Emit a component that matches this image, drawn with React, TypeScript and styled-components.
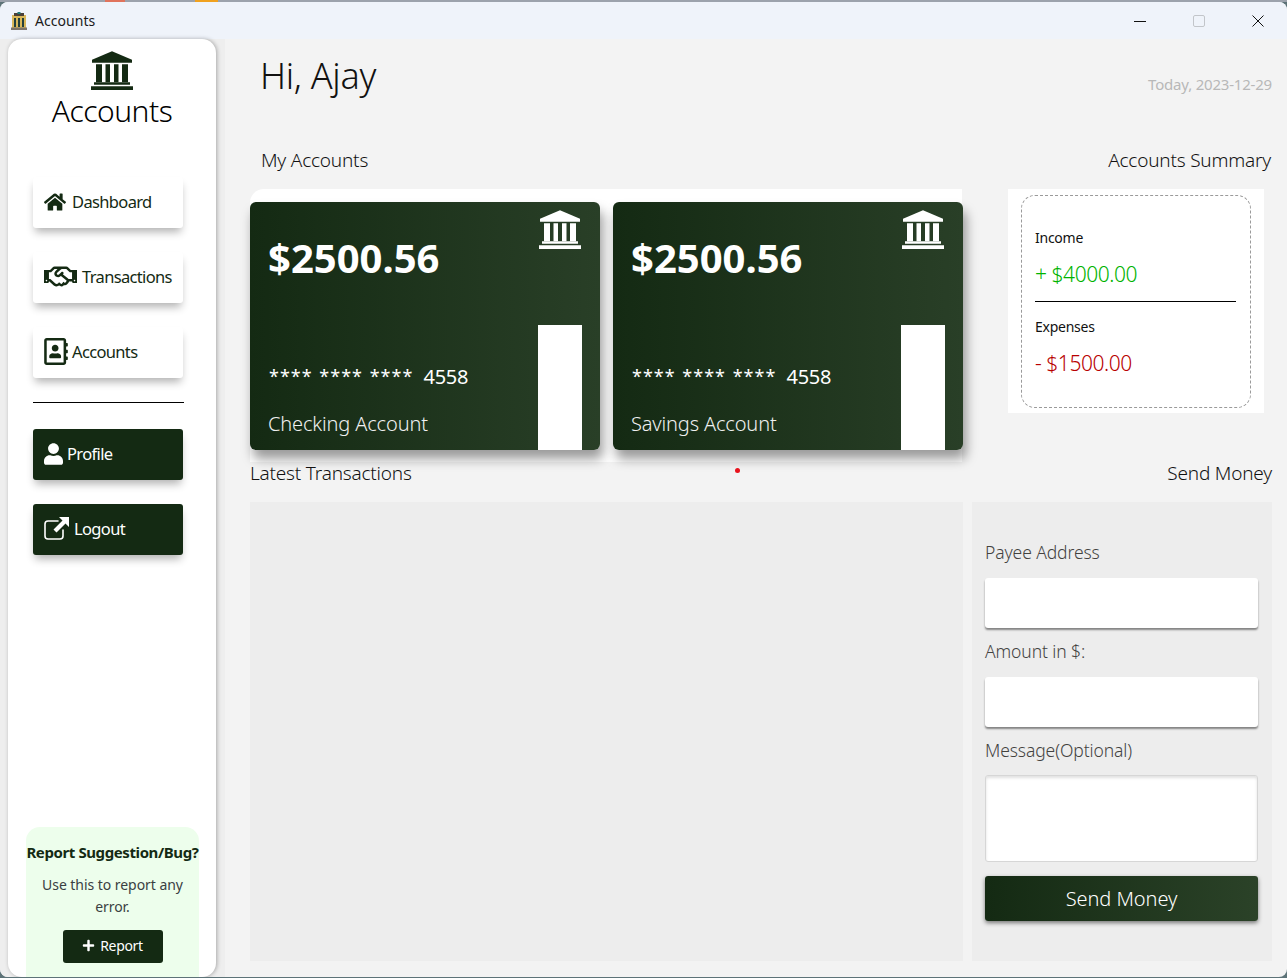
import React from "react";
import styled, { createGlobalStyle } from "styled-components";
import { FaHome, FaRegHandshake, FaRegAddressBook, FaUser, FaPlus } from "react-icons/fa";

const GREEN = "#142a13";
const FONT = `"Noto Sans", "Open Sans", sans-serif`;

const GlobalStyle = createGlobalStyle`
  html, body {
    margin: 0;
    padding: 0;
    background: #5d7378;
  }
  * {
    box-sizing: border-box;
  }
`;

const Desktop = styled.div`
  width: 1287px;
  height: 978px;
  padding-top: 2px;
  overflow: hidden;
  background: linear-gradient(
      90deg,
      transparent 105px,
      #e0735c 105px 125px,
      transparent 125px 195px,
      #f0a11e 195px 218px,
      transparent 218px
    )
    0 0 / 100% 2px no-repeat,
    linear-gradient(#9ca2ac 0 2px, #5d7378 2px);
  font-family: ${FONT};
`;

const Window = styled.div`
  height: 975px;
  display: flex;
  flex-direction: column;
  background: #f3f3f3;
  border-radius: 8px;
  overflow: hidden;
`;

const TitleBar = styled.div`
  height: 37px;
  flex: none;
  display: flex;
  align-items: center;
  padding-left: 11px;
  background: #eff3fa;
  color: #1b1b1b;
  font-size: 14px;
`;

const TitleText = styled.span`
  margin-left: 8px;
  letter-spacing: 0.05px;
`;

const WindowButtons = styled.div`
  margin-left: auto;
  display: flex;
`;

const WindowButton = styled.div`
  width: 59px;
  height: 37px;
  display: flex;
  align-items: center;
  justify-content: center;
`;

const Content = styled.div`
  flex: 1;
  min-height: 0;
  display: flex;
`;

const SideStrip = styled.div`
  width: 225px;
  flex: none;
  padding-left: 8px;
  background: #eeeeee;
`;

const Sidebar = styled.aside`
  width: 208px;
  height: 100%;
  display: flex;
  flex-direction: column;
  padding: 12px 0 0 25px;
  background: #fff;
  border-radius: 14px;
  box-shadow: 1px 0 4px rgba(0, 0, 0, 0.3);
`;

const Brand = styled.div`
  margin-left: -25px;
  margin-bottom: 46px;
  display: flex;
  flex-direction: column;
  align-items: center;
  color: ${GREEN};
`;

const BrandName = styled.div`
  margin-top: 1px;
  color: #000;
  font-size: 30px;
  font-weight: 300;
  line-height: 40px;
  letter-spacing: -0.5px;
`;

const NavButton = styled.div<{ $dark?: boolean; $gap: number }>`
  width: 150px;
  height: 51px;
  display: flex;
  align-items: center;
  gap: ${(p) => p.$gap}px;
  padding: 0 0 2px 11px;
  border-radius: 3px;
  background: ${(p) => (p.$dark ? GREEN : "#fff")};
  color: ${(p) => (p.$dark ? "#fff" : GREEN)};
  font-size: 16.5px;
  letter-spacing: -0.65px;
  box-shadow: 0 6px 8px -2px rgba(0, 0, 0, 0.3);
  margin-bottom: 24px;
`;

const BookIcon = styled(FaRegAddressBook)`
  width: 24px;
  height: 27px;
`;

const UserIcon = styled(FaUser)`
  width: 19px;
  height: 22px;
`;

const NavRule = styled.hr`
  width: 151px;
  height: 1px;
  margin: 0 0 26px;
  border: 0;
  background: #000;
`;

const ReportBox = styled.div`
  width: 173px;
  margin: auto 0 0 -7px;
  height: 150px;
  display: flex;
  flex-direction: column;
  align-items: center;
  padding-top: 15px;
  border-radius: 14px 14px 0 0;
  background: #edfeec;
  text-align: center;
`;

const ReportTitle = styled.div`
  color: ${GREEN};
  font-size: 15px;
  font-weight: 700;
  line-height: 20px;
  letter-spacing: -0.4px;
  white-space: nowrap;
`;

const ReportText = styled.div`
  margin-top: 12px;
  width: 150px;
  color: #3a4042;
  font-size: 14px;
  line-height: 22px;
  letter-spacing: -0.05px;
`;

const ReportButton = styled.div`
  width: 100px;
  height: 33px;
  margin-top: 12px;
  padding-bottom: 2px;
  display: flex;
  align-items: center;
  justify-content: center;
  gap: 5px;
  border-radius: 3px;
  background: ${GREEN};
  color: #fff;
  font-size: 14px;
  letter-spacing: -0.3px;
`;

const Main = styled.main`
  flex: 1;
  min-width: 0;
  padding: 0 15px 0 25px;
  display: flex;
  flex-direction: column;
`;

const Greeting = styled.div`
  height: 109px;
  display: flex;
  justify-content: space-between;
  padding: 13px 0 0 10px;
`;

const Hello = styled.h1`
  margin: 0;
  color: #111;
  font-size: 36px;
  font-weight: 300;
  line-height: 48px;
  letter-spacing: -0.3px;
`;

const Today = styled.div`
  margin-top: 22px;
  color: #b8b8b8;
  font-size: 15px;
  line-height: 20px;
  letter-spacing: -0.2px;
`;

const SectionHead = styled.div<{ $inset?: number }>`
  display: flex;
  justify-content: space-between;
  padding: 0 1px 0 ${(p) => p.$inset || 0}px;
  color: #111;
  font-size: 19px;
  font-weight: 300;
  line-height: 24px;
  letter-spacing: -0.2px;
`;

const TopRow = styled.div`
  margin-top: 17px;
  display: flex;
  align-items: flex-start;
`;

const CardStrip = styled.div`
  width: 712px;
  height: 273px;
  flex: none;
  display: flex;
  gap: 13px;
  padding-top: 13px;
  background: #fff;
  border-radius: 14px 0 0 0;
`;

const Card = styled.div`
  width: 350px;
  height: 248px;
  flex: none;
  display: flex;
  justify-content: space-between;
  padding: 0 18px;
  border-radius: 6px;
  background: linear-gradient(90deg, #142a13, #293f27);
  color: #fff;
  box-shadow: 3px 9px 12px rgba(0, 0, 0, 0.4);
`;

const CardBody = styled.div`
  display: flex;
  flex-direction: column;
`;

const Balance = styled.div`
  margin-top: 30px;
  font-size: 40px;
  font-weight: 700;
  line-height: 52px;
`;

const CardNumber = styled.div`
  margin-top: 77px;
  display: flex;
  align-items: center;
  gap: 10px;
  height: 30px;
  font-size: 20px;
  letter-spacing: -0.2px;
`;

const Stars = styled.span`
  font-size: 18px;
  letter-spacing: 1px;
  word-spacing: 1px;
  padding-left: 1px;
`;

const CardName = styled.div`
  margin-top: 19px;
  color: #f0f0f0;
  font-size: 20px;
  font-weight: 300;
  line-height: 28px;
  letter-spacing: -0.15px;
`;

const CardSide = styled.div`
  width: 44px;
  padding-top: 8px;
  display: flex;
  flex-direction: column;
  align-items: center;
  justify-content: space-between;
`;

const CardBar = styled.div`
  width: 44px;
  height: 125px;
  background: #fff;
`;

const SummaryBox = styled.div`
  width: 256px;
  height: 224px;
  margin-left: 46px;
  padding: 6px 13px 5px;
  background: #fff;
`;

const SummaryInner = styled.div`
  height: 100%;
  padding: 32px 14px 0 13px;
  border: 1px dashed #9a9a9a;
  border-radius: 14px;
`;

const SummaryLabel = styled.div`
  color: #111;
  font-size: 14px;
  line-height: 20px;
  letter-spacing: -0.25px;
`;

const SummaryValue = styled.div<{ $color: string }>`
  margin-top: 11px;
  color: ${(p) => p.$color};
  font-size: 21px;
  font-weight: 300;
  line-height: 30px;
  letter-spacing: -0.45px;
`;

const SummaryRule = styled.hr`
  height: 1px;
  margin: 12px 0 15px;
  border: 0;
  background: #000;
`;

const TxHead = styled(SectionHead)`
  margin-top: -1px;
  padding-right: 0;
`;

const BottomRow = styled.div`
  margin-top: 17px;
  display: flex;
  gap: 9px;
  height: 459px;
`;

const TxPanel = styled.div`
  width: 713px;
  background: #ededed;
`;

const FormPanel = styled.div`
  width: 300px;
  padding: 38px 13px 0;
  background: #ededed;
`;

const FieldLabel = styled.div`
  height: 25px;
  color: #43423f;
  font-size: 17.5px;
  font-weight: 300;
  line-height: 25px;
  letter-spacing: -0.1px;
`;

const TextField = styled.input`
  display: block;
  width: 273px;
  height: 50px;
  margin: 13px 0 11px;
  border: 0;
  border-radius: 3px;
  background: #fff;
  box-shadow: 0 2px 2px rgba(0, 0, 0, 0.45);
`;

const MessageField = styled.textarea`
  display: block;
  width: 273px;
  height: 87px;
  margin-top: 12px;
  border: 1px solid #d6d6d6;
  border-radius: 3px;
  background: #fff;
  resize: none;
  box-shadow: inset 0 2px 3px rgba(0, 0, 0, 0.12);
`;

const SendButton = styled.div`
  width: 273px;
  height: 45px;
  margin-top: 14px;
  display: flex;
  align-items: center;
  justify-content: center;
  border-radius: 3px;
  background: linear-gradient(90deg, #142a13, #2b4228);
  color: #fff;
  font-size: 20px;
  font-weight: 300;
  letter-spacing: -0.05px;
  box-shadow: 0 2px 4px rgba(0, 0, 0, 0.5);
`;

const Dot = styled.div`
  position: absolute;
  top: 468px;
  left: 735px;
  width: 5px;
  height: 5px;
  border-radius: 50%;
  background: #e8121c;
`;

const BankIcon: React.FC<{ size: number; color: string }> = ({ size, color }) => (
  <svg width={size} height={size * 0.94} viewBox="0 0 42 39" fill={color}>
    <path d="M21 0 L41 8.5 V11.5 H1 V8.5 Z" />
    <path d="M5 13 H11 V31 H5 Z M14.5 13 H19 V31 H14.5 Z M23 13 H27.5 V31 H23 Z M31 13 H37 V31 H31 Z" />
    <path d="M3 31 H39 V33.5 H3 Z" />
    <path d="M0 35 H42 V39 H0 Z" />
  </svg>
);

const LogoutIcon = () => (
  <svg width="25" height="23" viewBox="0 0 25 23" fill="none">
    <path
      d="M14 4 H4 A3 3 0 0 0 1 7 V19 A3 3 0 0 0 4 22 H16 A3 3 0 0 0 19 19 V13"
      stroke="#fff"
      strokeWidth="1.6"
      strokeLinecap="round"
    />
    <path d="M15 0 H25 V10 L21.5 6.5 L12.5 15.5 L9.5 12.5 L18.5 3.5 Z" fill="#fff" />
  </svg>
);

const AppIcon = () => (
  <svg width="16" height="18" viewBox="0 0 16 18">
    <path d="M1 3 H15 V18 H1 Z" fill="#d9b85a" />
    <path d="M3 1 H13 V4 H3 Z" fill="#4a4038" />
    <path d="M6.5 0 H9.5 V2 H6.5 Z" fill="#1f7a78" />
    <path d="M3 6 H5 V15 H3 Z M7 6 H9 V15 H7 Z M11 6 H13 V15 H11 Z" fill="#24403c" />
    <path d="M0 15.5 H16 V18 H0 Z" fill="#7d7469" />
  </svg>
);

const accounts = [
  { name: "Checking Account", balance: "$2500.56" },
  { name: "Savings Account", balance: "$2500.56" },
];

export default function App() {
  return (
    <Desktop>
      <GlobalStyle />
      <Window>
        <TitleBar>
          <AppIcon />
          <TitleText>Accounts</TitleText>
          <WindowButtons>
            <WindowButton>
              <svg width="12" height="12" viewBox="0 0 12 12">
                <path d="M0 6.5 H12" stroke="#111" />
              </svg>
            </WindowButton>
            <WindowButton>
              <svg width="12" height="12" viewBox="0 0 12 12">
                <rect x="0.5" y="0.5" width="11" height="11" rx="1.5" fill="none" stroke="#c2c5ca" />
              </svg>
            </WindowButton>
            <WindowButton>
              <svg width="12" height="12" viewBox="0 0 12 12">
                <path d="M0.5 0.5 L11.5 11.5 M11.5 0.5 L0.5 11.5" stroke="#111" />
              </svg>
            </WindowButton>
          </WindowButtons>
        </TitleBar>
        <Content>
          <SideStrip>
            <Sidebar>
              <Brand>
                <BankIcon size={42} color={GREEN} />
                <BrandName>Accounts</BrandName>
              </Brand>
              <NavButton $gap={6}>
                <FaHome size={22} />
                Dashboard
              </NavButton>
              <NavButton $gap={5}>
                <FaRegHandshake size={33} />
                Transactions
              </NavButton>
              <NavButton $gap={4}>
                <BookIcon />
                Accounts
              </NavButton>
              <NavRule />
              <NavButton $dark $gap={4}>
                <UserIcon />
                Profile
              </NavButton>
              <NavButton $dark $gap={5}>
                <LogoutIcon />
                Logout
              </NavButton>
              <ReportBox>
                <ReportTitle>Report Suggestion/Bug?</ReportTitle>
                <ReportText>Use this to report any error.</ReportText>
                <ReportButton>
                  <FaPlus size={13} />
                  Report
                </ReportButton>
              </ReportBox>
            </Sidebar>
          </SideStrip>
          <Main>
            <Greeting>
              <Hello>Hi, Ajay</Hello>
              <Today>Today, 2023-12-29</Today>
            </Greeting>
            <SectionHead $inset={11}>
              <span>My Accounts</span>
              <span>Accounts Summary</span>
            </SectionHead>
            <TopRow>
              <CardStrip>
                {accounts.map((a) => (
                  <Card key={a.name}>
                    <CardBody>
                      <Balance>{a.balance}</Balance>
                      <CardNumber>
                        <Stars>**** **** ****</Stars>
                        4558
                      </CardNumber>
                      <CardName>{a.name}</CardName>
                    </CardBody>
                    <CardSide>
                      <BankIcon size={42} color="#fff" />
                      <CardBar />
                    </CardSide>
                  </Card>
                ))}
              </CardStrip>
              <SummaryBox>
                <SummaryInner>
                  <SummaryLabel>Income</SummaryLabel>
                  <SummaryValue $color="#00b300">+ $4000.00</SummaryValue>
                  <SummaryRule />
                  <SummaryLabel>Expenses</SummaryLabel>
                  <SummaryValue $color="#b80000">- $1500.00</SummaryValue>
                </SummaryInner>
              </SummaryBox>
            </TopRow>
            <TxHead>
              <span>Latest Transactions</span>
              <span>Send Money</span>
            </TxHead>
            <BottomRow>
              <TxPanel />
              <FormPanel>
                <FieldLabel>Payee Address</FieldLabel>
                <TextField />
                <FieldLabel>Amount in $:</FieldLabel>
                <TextField />
                <FieldLabel>Message(Optional)</FieldLabel>
                <MessageField />
                <SendButton>Send Money</SendButton>
              </FormPanel>
            </BottomRow>
          </Main>
        </Content>
      </Window>
      <Dot />
    </Desktop>
  );
}
